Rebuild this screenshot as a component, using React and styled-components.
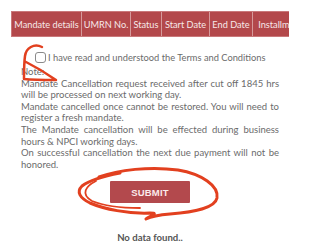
import React from "react"
import styled, { createGlobalStyle } from 'styled-components'

const GlobalStyle = createGlobalStyle`
  html, body {
    margin: 0;
    padding: 0;
    background: #fff;
  }
  body {
    font-family: Lato, "Open Sans", sans-serif;
  }
`

const columns = [
  { label: 'Mandate details', width: 70 },
  { label: 'UMRN No.', width: 49 },
  { label: 'Status', width: 31 },
  { label: 'Start Date', width: 48 },
  { label: 'End Date', width: 43 },
  { label: 'Installments', width: 60 },
]

const notes = [
  'Mandate Cancellation request received after cut off 1845 hrs will be processed on next working day.',
  'Mandate cancelled once cannot be restored. You will need to register a fresh mandate.',
  'The Mandate cancellation will be effected during business hours & NPCI working days.',
  'On successful cancellation the next due payment will not be honored.',
]

export default () => {
  return (
    <Page>
      <GlobalStyle />
      <TableWrap>
        <HeaderRow>
          {columns.map(c => (
            <HeadCell key={c.label} $w={c.width}>{c.label}</HeadCell>
          ))}
        </HeaderRow>
      </TableWrap>
      <Terms>
        <Check type="checkbox" />
        <span>I have read and understood the Terms and Conditions</span>
      </Terms>
      <Notes>
        <NoteTitle>Note:</NoteTitle>
        {notes.map(n => <Para key={n}>{n}</Para>)}
      </Notes>
      <Actions>
        <SubmitButton>SUBMIT</SubmitButton>
      </Actions>
      <Empty>No data found..</Empty>
      {/* hand-drawn red marks over the screenshot */}
      <Marks viewBox="0 0 300 245" width="300" height="245">
        <path
          d="M42 47 C34 43 26 48 25 56 C24 63 24 72 24 79 C34 80 46 80 56 80 C46 73 36 67 26 62"
          fill="none" stroke="#e2401f" strokeWidth="2.5" strokeLinecap="round" strokeLinejoin="round"
        />
        <path
          d="M99 177 C118 170 150 166 178 170 C202 174 219 186 217 198 C215 208 195 212 170 214 C158 215 150 217 146 219 C150 216 160 213 150 213 C128 214 104 209 90 203 C80 198 76 192 82 186 C90 180 104 176 120 173"
          fill="none" stroke="#e2401f" strokeWidth="3" strokeLinecap="round" strokeLinejoin="round"
        />
        <path
          d="M96 181 C86 186 80 194 92 201 C104 206 120 208 140 208"
          fill="none" stroke="#e2401f" strokeWidth="1.8" strokeLinecap="round"
        />
      </Marks>
    </Page>
  )
}

const Page = styled.div`
  position: relative;
  width: 300px;
  height: 245px;
  overflow: hidden;
  background: #fff;
`

const TableWrap = styled.div`
  margin: 11px 11px 0 11px;
  width: 278px;
  overflow: hidden;
`

const HeaderRow = styled.div`
  display: flex;
  width: max-content;
  height: 26px;
  background: #b3484b;
  border: 1px solid #c9787a;
  box-sizing: border-box;
`

const HeadCell = styled.div`
  flex: 0 0 ${p => p.$w}px;
  display: flex;
  align-items: center;
  justify-content: center;
  border-right: 1px solid #d69a9b;
  box-sizing: border-box;
  color: #f7e9e9;
  font-size: 9.2px;
  white-space: nowrap;
`

const Terms = styled.label`
  display: flex;
  align-items: center;
  gap: 2px;
  margin: 14px 0 0 35px;
  height: 12px;
  font-size: 9.3px;
  color: #6b6b6b;
  white-space: nowrap;
`

const Check = styled.input`
  appearance: none;
  margin: 0;
  width: 11px;
  height: 11px;
  border: 1px solid #8a8a8a;
  border-radius: 3px;
  background: #fff;
  box-sizing: border-box;
`

const Notes = styled.div`
  margin: 3px 0 0 21px;
  width: 258px;
  font-size: 9.5px;
  line-height: 11.6px;
  color: #6b6b6b;
`

const NoteTitle = styled.div``

const Para = styled.p`
  margin: 0;
  text-align: justify;
`

const Actions = styled.div`
  display: flex;
  justify-content: center;
  margin-top: 11px;
`

const SubmitButton = styled.button`
  width: 80px;
  height: 22px;
  border: none;
  border-radius: 1px;
  background: #b3494d;
  color: #fbeaea;
  font-family: "Liberation Sans", Arial, sans-serif;
  font-weight: bold;
  font-size: 9.5px;
  letter-spacing: 0.2px;
  padding: 0;
`

const Empty = styled.div`
  margin-top: 29px;
  text-align: center;
  font-weight: bold;
  font-size: 9.6px;
  color: #555;
`

const Marks = styled.svg`
  position: absolute;
  left: 0;
  top: 0;
  pointer-events: none;
`
